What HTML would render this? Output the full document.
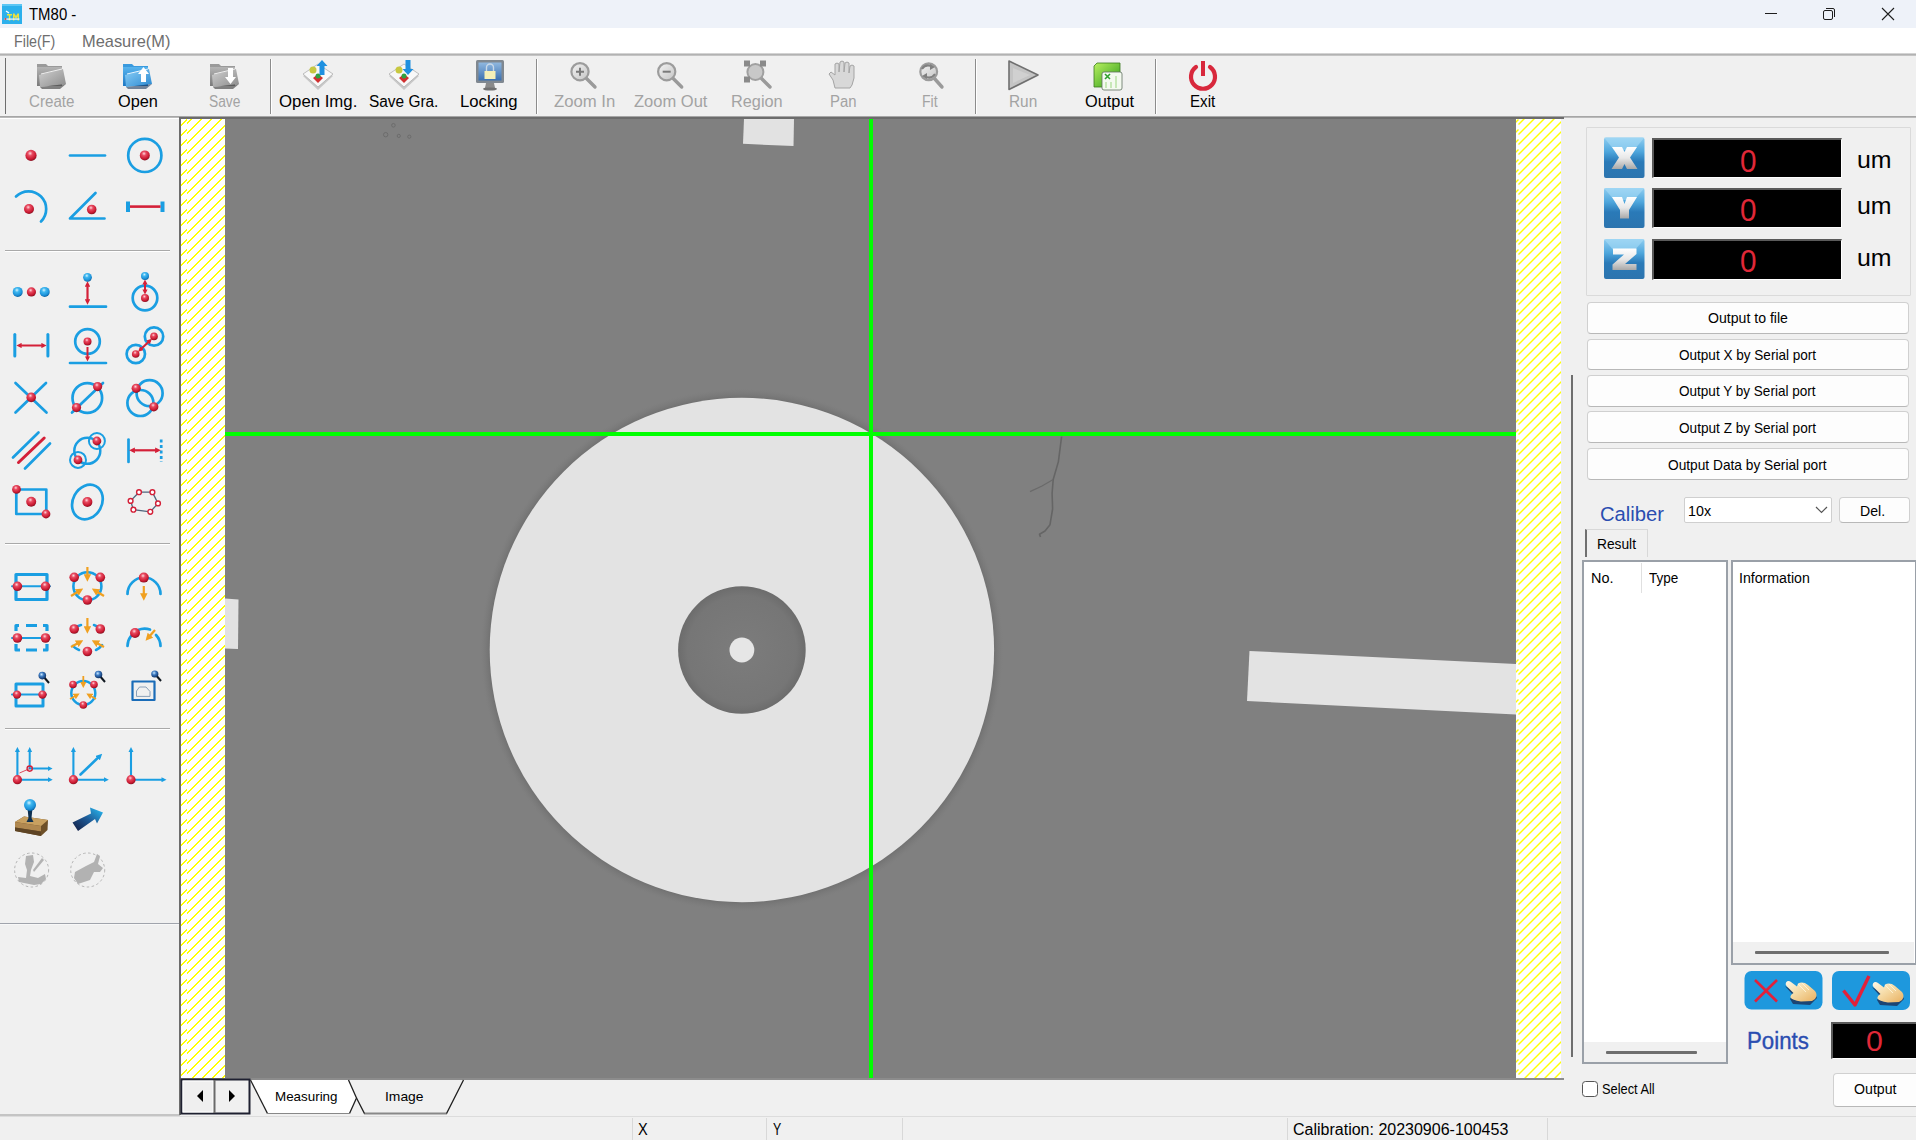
<!DOCTYPE html>
<html><head><meta charset="utf-8">
<style>
*{box-sizing:border-box;margin:0;padding:0}
html,body{width:1916px;height:1140px;overflow:hidden}
body{position:relative;background:#f0f0f0;font-family:"Liberation Sans",sans-serif;color:#000}
.a{position:absolute}
.tx{position:absolute;white-space:pre;line-height:normal;transform-origin:0 0}
svg.a{overflow:visible}
.hatch{background-color:#fff;background-image:repeating-linear-gradient(-45deg,#fff 0,#fff 5.6px,#ffff00 5.6px,#ffff00 7.07px)}
.btn{position:absolute;background:#fdfdfd;border:1px solid #d0d0d0;border-bottom-color:#b8b8b8;border-radius:4px}
.disp{position:absolute;background:#000;border-top:2px solid #5a5a5a;border-left:2px solid #5a5a5a;border-bottom:1px solid #fff;border-right:1px solid #fff}
.sep{position:absolute;width:2px;background:linear-gradient(90deg,#8c8c8c 50%,#fff 50%)}
</style></head><body>
<!-- title bar -->
<div class="a" style="left:0;top:0;width:1916px;height:28px;background:#eef2f9"></div>
<svg class="a" style="left:2px;top:4px" width="20" height="20">
<rect x="0" y="0" width="20" height="20" fill="#2cb0ec"/>
<rect x="0" y="0" width="20" height="2" fill="#5cc6f4"/>
<path d="M5 10 L10 10 L10 11.5 L8.3 11.5 L8.3 16.5 L6.8 16.5 L6.8 11.5 L5 11.5 Z" fill="#e6e840"/>
<path d="M11 16.5 L11 9.5 L12.5 9.5 L14 12 L15.5 9.5 L17 9.5 L17 16.5 L15.6 16.5 L15.6 12.5 L14 15 L12.4 12.5 L12.4 16.5 Z" fill="#e8e040"/>
<rect x="2.5" y="14.5" width="15" height="1.2" fill="#f4f8ff"/>
<circle cx="3.5" cy="15" r="1" fill="#e04040"/>
<path d="M4 7 L7 9" stroke="#fff" stroke-width="1.4"/>
</svg>

<div class="a" style="left:1765px;top:13px;width:12px;height:1px;background:#1e1e1e"></div>
<svg class="a" style="left:1821px;top:6px" width="16" height="16"><rect x="2.5" y="4.5" width="9" height="9" rx="1.5" fill="none" stroke="#1e1e1e" stroke-width="1"/><path d="M5 2.5H12a1.5 1.5 0 0 1 1.5 1.5V11" fill="none" stroke="#1e1e1e" stroke-width="1"/></svg>
<svg class="a" style="left:1881px;top:7px" width="14" height="14"><path d="M1 1L13 13M13 1L1 13" stroke="#1e1e1e" stroke-width="1.1"/></svg>
<!-- menu -->
<div class="a" style="left:0;top:28px;width:1916px;height:25px;background:#fff"></div>
<div class="a" style="left:0;top:53px;width:1916px;height:3px;background:linear-gradient(#e4e4e4,#a8a8a8 60%,#d8d8d8)"></div>
<!-- toolbar -->
<div class="a" style="left:5px;top:58px;width:1px;height:56px;background:#6e6e6e"></div>
<div class="sep" style="left:270px;top:59px;height:55px"></div>
<div class="sep" style="left:536px;top:59px;height:55px"></div>
<div class="sep" style="left:975px;top:59px;height:55px"></div>
<div class="sep" style="left:1155px;top:59px;height:55px"></div>
<div class="a" style="left:0;top:116px;width:1916px;height:2px;background:linear-gradient(#9c9c9c,#c4c4c4)"></div>
<svg class="a" style="left:0;top:0" width="1300" height="118" viewBox="0 0 1300 118">
<defs>
<linearGradient id="fgray" x1="0" y1="0" x2="0" y2="1"><stop offset="0" stop-color="#b4b4b4"/><stop offset="1" stop-color="#7a7a7a"/></linearGradient>
<linearGradient id="fgray2" x1="0" y1="0" x2="1" y2="1"><stop offset="0" stop-color="#d0d0d0"/><stop offset="1" stop-color="#8c8c8c"/></linearGradient>
<linearGradient id="fblue" x1="0" y1="0" x2="0" y2="1"><stop offset="0" stop-color="#58b4ee"/><stop offset="1" stop-color="#1e78c4"/></linearGradient>
<linearGradient id="fblue2" x1="0" y1="0" x2="1" y2="1"><stop offset="0" stop-color="#8cd0f8"/><stop offset="1" stop-color="#2a88d0"/></linearGradient>
<linearGradient id="lens" x1="0" y1="0" x2="1" y2="1"><stop offset="0" stop-color="#f4f4f4"/><stop offset="1" stop-color="#c4c4c4"/></linearGradient>
<linearGradient id="xlg" x1="0" y1="0" x2="1" y2="1"><stop offset="0" stop-color="#b8f060"/><stop offset="1" stop-color="#2c9a18"/></linearGradient>
<linearGradient id="scr" x1="0" y1="0" x2="0" y2="1"><stop offset="0" stop-color="#90b8e0"/><stop offset="1" stop-color="#3a70b0"/></linearGradient>
</defs>
<!-- Create (gray folder) -->
<path d="M37 64 L46 64 L48 66 L62 66 L62 70 L37 70 Z" fill="#9a9a9a"/>
<path d="M37 67 L62 67 L62 86 L37 86 Z" fill="url(#fgray)"/>
<path d="M39 75 L63 69 L66 84 L40 87 Z" fill="url(#fgray2)"/>
<path d="M41 74 L62 69" stroke="#eee" stroke-width="1"/>
<path d="M40 87 L66 84 L60 89 L42 89 Z" fill="#505050" opacity="0.7"/>
<!-- Open (blue folder, up arrow) -->
<path d="M123 64 L132 64 L134 66 L148 66 L148 70 L123 70 Z" fill="#3a9ade"/>
<path d="M123 67 L148 67 L148 86 L123 86 Z" fill="url(#fblue)"/>
<path d="M125 75 L149 69 L152 84 L126 87 Z" fill="url(#fblue2)"/>
<path d="M127 74 L148 69" stroke="#e8f6ff" stroke-width="1"/>
<path d="M126 87 L152 84 L146 89 L128 89 Z" fill="#1a3a60" opacity="0.6"/>
<path d="M143.5 67 L149 74 L146 74 L146 82 L141 82 L141 74 L138 74 Z" fill="#fff"/>
<!-- Save (gray folder, down arrow) -->
<path d="M210 64 L219 64 L221 66 L235 66 L235 70 L210 70 Z" fill="#9a9a9a"/>
<path d="M210 67 L235 67 L235 86 L210 86 Z" fill="url(#fgray)"/>
<path d="M212 75 L236 69 L239 84 L213 87 Z" fill="url(#fgray2)"/>
<path d="M214 74 L235 69" stroke="#eee" stroke-width="1"/>
<path d="M213 87 L239 84 L233 89 L215 89 Z" fill="#505050" opacity="0.7"/>
<path d="M228 68 L233 68 L233 77 L236 77 L230.5 84 L225 77 L228 77 Z" fill="#fff"/>
<!-- Open Img. -->
<g>
<path d="M303 76 L318 66 L333 76 L318 90 Z" fill="#c8c8c8"/>
<path d="M303 74 L318 64 L333 74 L318 87 Z" fill="#f8f8f8" stroke="#b0b0b0" stroke-width="0.8"/>
<circle cx="313" cy="70" r="3.5" fill="#c8c840"/>
<path d="M313 78 L318 74 L323 78 L318 83 Z" fill="#d03030"/>
<circle cx="318" cy="76" r="2.5" fill="#30a040"/>
<path d="M322 60 L327.5 66 L324.5 66 L324.5 75 L319.5 75 L319.5 66 L316.5 66 Z" fill="#1e90e0"/>
</g>
<g>
<path d="M389 76 L404 66 L419 76 L404 90 Z" fill="#c8c8c8"/>
<path d="M389 74 L404 64 L419 74 L404 87 Z" fill="#f8f8f8" stroke="#b0b0b0" stroke-width="0.8"/>
<circle cx="399" cy="70" r="3.5" fill="#c8c840"/>
<path d="M399 78 L404 74 L409 78 L404 83 Z" fill="#d03030"/>
<circle cx="404" cy="76" r="2.5" fill="#30a040"/>
<path d="M405.5 60 L410.5 60 L410.5 69 L413.5 69 L408 75 L402.5 69 L405.5 69 Z" fill="#1e90e0"/>
</g>
<!-- Locking (monitor) -->
<rect x="476" y="60" width="28" height="23" rx="1.5" fill="#808890"/>
<rect x="478.5" y="62.5" width="23" height="18" fill="url(#scr)"/>
<rect x="484.5" y="71" width="11" height="8" fill="#f4f0b8"/>
<path d="M486.5 71 L486.5 67.5 A3.5 3.5 0 0 1 493.5 67.5 L493.5 71" fill="none" stroke="#c8d8e8" stroke-width="1.4"/>
<path d="M486 83 L494 83 L495 88 L485 88 Z" fill="#8a8a8a"/>
<ellipse cx="490" cy="89" rx="7" ry="1.6" fill="#707070"/>
<!-- Zoom In -->
<g opacity="1">
<line x1="586" y1="78" x2="595" y2="87" stroke="#9a9a9a" stroke-width="3.4" stroke-linecap="round"/>
<circle cx="580" cy="71.7" r="8.6" fill="url(#lens)" stroke="#9c9c9c" stroke-width="2.2"/>
<path d="M576 71.7 L584 71.7 M580 67.7 L580 75.7" stroke="#7a7a7a" stroke-width="2"/>
<line x1="672.7" y1="78" x2="681.7" y2="87" stroke="#9a9a9a" stroke-width="3.4" stroke-linecap="round"/>
<circle cx="666.7" cy="71.7" r="8.6" fill="url(#lens)" stroke="#9c9c9c" stroke-width="2.2"/>
<path d="M662.7 71.7 L670.7 71.7" stroke="#7a7a7a" stroke-width="2"/>
<!-- Region -->
<line x1="761" y1="78" x2="770" y2="87" stroke="#9a9a9a" stroke-width="3.4" stroke-linecap="round"/>
<circle cx="755.4" cy="72" r="8" fill="#c8c8c8" stroke="#a0a0a0" stroke-width="2"/>
<rect x="744" y="60.5" width="6" height="6" fill="#8a8a8a"/><rect x="760" y="60.5" width="6" height="6" fill="#8a8a8a"/><rect x="744" y="76.5" width="6" height="6" fill="#8a8a8a"/>
<!-- Pan (hand) -->
<path d="M835 88 L833 80 L829 74 L831 72 L835 75 L835 64 Q837 62 839 64 L839 72 L840 62 Q842 60 844 62 L844 72 L845 63 Q847 61 849 63 L849 73 L850 66 Q852 64 854 66 L854 78 L852 85 L850 88 Z" fill="#d8d8d8" stroke="#a4a4a4" stroke-width="1"/>
<!-- Fit -->
<line x1="934" y1="78" x2="942" y2="87" stroke="#9a9a9a" stroke-width="3.4" stroke-linecap="round"/>
<circle cx="928.7" cy="71.7" r="8.4" fill="url(#lens)" stroke="#9c9c9c" stroke-width="2.2"/>
<path d="M922 69 Q926 63 933 67 M935 74 Q931 80 924 76" stroke="#808080" stroke-width="2" fill="none"/>
<path d="M930 64 L935 67 L930 70 Z M927 73 L922 76 L927 79 Z" fill="#808080"/>
</g>
<!-- Run -->
<path d="M1009 61 L1038 75 L1009 89.5 Z" fill="#c4c4c4" stroke="#707070" stroke-width="1.6" stroke-linejoin="round"/>
<path d="M1013 68 L1030 75 L1013 83 Z" fill="#d0d0d0"/>
<!-- Output (excel) -->
<path d="M1097 63 L1120 63 L1120 87 L1094 87 L1094 66 Z" fill="url(#xlg)" stroke="#3a7a20" stroke-width="0.8"/>
<rect x="1102" y="72" width="20" height="18" rx="2" fill="#f4faf0" stroke="#607060" stroke-width="0.8"/>
<path d="M1105 74 L1110 79 M1110 74 L1105 79" stroke="#30a030" stroke-width="1.6"/>
<path d="M1106 82 L1106 88 M1111 82 L1111 88 M1116 76 L1116 88" stroke="#c8e8b8" stroke-width="2"/>
<!-- Exit (power) -->
<path d="M1196 67 A12 12 0 1 0 1210 67" fill="none" stroke="#d8283c" stroke-width="4.2" stroke-linecap="round"/>
<line x1="1203" y1="61" x2="1203" y2="76" stroke="#d8283c" stroke-width="4"/>
</svg>


<!-- left panel -->
<div class="a" style="left:0;top:118px;width:179px;height:1px;background:#fff"></div>
<div class="a" style="left:5px;top:250px;width:165px;height:2px;background:linear-gradient(#a9a9a9 50%,#fff 50%)"></div>
<div class="a" style="left:5px;top:543px;width:165px;height:2px;background:linear-gradient(#a9a9a9 50%,#fff 50%)"></div>
<div class="a" style="left:5px;top:728px;width:165px;height:2px;background:linear-gradient(#a9a9a9 50%,#fff 50%)"></div>
<div class="a" style="left:0;top:923px;width:179px;height:2px;background:linear-gradient(#a0a4ac 50%,#f8f8f8 50%)"></div>
<div class="a" style="left:0;top:1114px;width:180px;height:2px;background:#c4c4c4"></div>
<svg class="a" style="left:0;top:0" width="180" height="1140" viewBox="0 0 180 1140">
<defs>
<radialGradient id="rb" cx="0.42" cy="0.32" r="0.7"><stop offset="0" stop-color="#ffd8de"/><stop offset="0.3" stop-color="#e84a60"/><stop offset="0.75" stop-color="#c81830"/><stop offset="1" stop-color="#801020"/></radialGradient>
<radialGradient id="bb" cx="0.42" cy="0.32" r="0.7"><stop offset="0" stop-color="#d8f4ff"/><stop offset="0.3" stop-color="#40b8f0"/><stop offset="0.75" stop-color="#1a90d8"/><stop offset="1" stop-color="#0a5c98"/></radialGradient>
<radialGradient id="mg" cx="0.4" cy="0.35" r="0.7"><stop offset="0" stop-color="#c8e8ff"/><stop offset="0.4" stop-color="#3a78c0"/><stop offset="1" stop-color="#0a2858"/></radialGradient>
<marker id="ar" viewBox="0 0 10 10" refX="5" refY="5" markerWidth="2.6" markerHeight="2.6" orient="auto-start-reverse"><path d="M0 0L10 5L0 10Z" fill="#d42038"/></marker>
<marker id="ab" viewBox="0 0 10 10" refX="4" refY="5" markerWidth="2.4" markerHeight="2.4" orient="auto-start-reverse"><path d="M0 0L10 5L0 10Z" fill="#1a9ee2"/></marker>
<marker id="ao" viewBox="0 0 10 10" refX="5" refY="5" markerWidth="3.4" markerHeight="3.4" orient="auto"><path d="M0 0L10 5L0 10Z" fill="#f0a020"/></marker>
</defs>
<g fill="none" stroke="#1a9ee2" stroke-width="2.7" stroke-linecap="round" stroke-linejoin="round">
<!-- row1 -->
<line x1="70" y1="155.5" x2="105" y2="155.5"/>
<circle cx="144.8" cy="155.4" r="16.6"/>
<!-- row2 -->
<path d="M16 196.5 A17 17 0 1 1 41 221.5"/>
<path d="M104.5 218.5 L70 218.5 L95.5 193"/>
<line x1="128" y1="201.5" x2="128" y2="212" stroke-width="4" stroke-linecap="butt"/>
<line x1="162.5" y1="201.5" x2="162.5" y2="212" stroke-width="4" stroke-linecap="butt"/>
<!-- row3 -->
<line x1="70" y1="306.7" x2="106" y2="306.7"/>
<circle cx="145" cy="298" r="12.3"/>
<!-- row4 -->
<line x1="14.8" y1="334.5" x2="14.8" y2="356" stroke-width="3"/>
<line x1="47.9" y1="334.5" x2="47.9" y2="356" stroke-width="3"/>
<circle cx="87.5" cy="341.5" r="12.3"/>
<line x1="70" y1="363" x2="106" y2="363"/>
<circle cx="135.8" cy="354" r="9.2"/>
<circle cx="154" cy="336.5" r="9.2"/>
<!-- row5 -->
<line x1="15.5" y1="383" x2="46.5" y2="412.5"/>
<line x1="46" y1="383" x2="15.5" y2="412.5"/>
<circle cx="87.3" cy="398" r="14.8"/>
<line x1="72" y1="412.5" x2="103" y2="383"/>
<circle cx="140.4" cy="403" r="13"/>
<circle cx="149.6" cy="393.2" r="13"/>
<!-- row6 -->
<line x1="13" y1="457.5" x2="38.5" y2="432.5"/>
<line x1="25" y1="468.5" x2="50" y2="443.5"/>
<circle cx="87.3" cy="450.8" r="13" stroke-width="2.5"/>
<circle cx="96.9" cy="441" r="8" stroke-width="2"/>
<circle cx="78" cy="459.9" r="8" stroke-width="2"/>
<line x1="128.5" y1="439.5" x2="128.5" y2="462"/>
<line x1="161.2" y1="439.5" x2="161.2" y2="462" stroke-dasharray="3 2.5" stroke-linecap="butt"/>
<!-- row7 -->
<rect x="16.3" y="489.5" width="30" height="24.5" stroke-linecap="butt"/>
<ellipse cx="87.4" cy="502" rx="18" ry="14.5" transform="rotate(-62 87.4 502)"/>
<!-- row8 -->
<rect x="16" y="574.5" width="31" height="25" stroke-width="3.2" stroke-linecap="butt"/>
<line x1="12" y1="586.3" x2="50" y2="586.3" stroke-width="2"/>
<circle cx="87.4" cy="586.3" r="14" stroke-width="2.6"/>
<path d="M127.5 594 A16.5 16.5 0 0 1 160.5 594"/>
<!-- row9 -->
<path d="M16 574.5 M19 625.5 L16 625.5 L16 631 M16 644 L16 650 L20 650 M26 650 L37 650 M43 650 L47 650 L47 644 M47 631 L47 625.5 L43 625.5 M37 625.5 L26 625.5" stroke-width="3.2" stroke-linecap="butt"/>
<line x1="12" y1="638" x2="50" y2="638" stroke-width="2"/>
<path d="M81 625 A14 14 0 0 0 74 629 M100.5 629 A14 14 0 0 0 94 625 M73 646 A14 14 0 0 0 79 650 M96 650 A14 14 0 0 0 102 645" stroke-width="2.6"/>
<path d="M127.5 646 A16.5 16.5 0 0 1 131 636 M138 630 A16.5 16.5 0 0 1 150 629.5 M156 635 A16.5 16.5 0 0 1 160.5 646"/>
<!-- row10 -->
<rect x="16" y="684" width="27" height="22" stroke-width="3" stroke-linecap="butt"/>
<line x1="12" y1="694.6" x2="46" y2="694.6" stroke-width="2"/>
<circle cx="83.3" cy="693" r="12" stroke-width="2.5"/>
<rect x="132.5" y="681.5" width="22" height="18.5" stroke="#1a6cb8" stroke-width="2.2" stroke-linecap="butt"/>
<path d="M136.5 696 L136.5 691 L139.5 687 L146 687 L150 691.5 L150 696 Z" stroke="#8aa0b8" stroke-width="1"/>
<!-- row11 -->
<path d="M17.4 750 L17.4 779.7 L49.7 779.7" stroke-width="2.1" stroke-linecap="butt" marker-start="url(#ab)" marker-end="url(#ab)"/>
<path d="M29.7 750 L29.7 768.6 L49.7 768.6" stroke-width="2" stroke-linecap="butt" marker-start="url(#ab)" marker-end="url(#ab)"/>
<path d="M73.4 750 L73.4 779.7 L105.8 779.7" stroke-width="2.1" stroke-linecap="butt" marker-start="url(#ab)" marker-end="url(#ab)"/>
<path d="M80.5 774.5 L99.5 756.3" stroke-width="2.6" marker-end="url(#ab)"/>
<path d="M131 750 L131 779.7 L163.5 779.7" stroke-width="2.1" stroke-linecap="butt" marker-start="url(#ab)" marker-end="url(#ab)"/>
</g>
<!-- red elements -->
<g stroke="#d42038" fill="none" stroke-linecap="butt">
<line x1="130" y1="206.6" x2="160.5" y2="206.6" stroke-width="2.6"/>
<line x1="87.5" y1="284" x2="87.5" y2="302" stroke-width="2.2" marker-start="url(#ar)" marker-end="url(#ar)"/>
<line x1="145" y1="282" x2="145" y2="292" stroke-width="2" marker-start="url(#ar)" marker-end="url(#ar)"/>
<line x1="19" y1="345.5" x2="44" y2="345.5" stroke-width="2" marker-start="url(#ar)" marker-end="url(#ar)"/>
<line x1="87.5" y1="347" x2="87.5" y2="359" stroke-width="2" marker-end="url(#ar)"/>
<line x1="140" y1="350" x2="150" y2="340.5" stroke-width="2" marker-start="url(#ar)" marker-end="url(#ar)"/>
<line x1="18.5" y1="462.5" x2="44.2" y2="438" stroke-width="3" stroke-linecap="round"/>
<line x1="132" y1="450.3" x2="158" y2="450.3" stroke-width="2.2" marker-start="url(#ar)" marker-end="url(#ar)"/>
<line x1="19.5" y1="773" x2="29.7" y2="768.6" stroke-width="0.8"/>
<circle cx="29.7" cy="768.6" r="2.6" stroke-width="1.4"/>
</g>
<!-- polygon -->
<path d="M139 492.2 L152.4 492.2 L158 503.4 L150.3 511.8 L133.4 509.7 L130.6 500.9 Z" fill="none" stroke="#50647c" stroke-width="1.3"/>
<g fill="#fff" stroke="#d42038" stroke-width="1.4">
<circle cx="139" cy="492.2" r="2.4"/><circle cx="152.4" cy="492.2" r="2.4"/><circle cx="158" cy="503.4" r="2.4"/><circle cx="150.3" cy="511.8" r="2.4"/><circle cx="133.4" cy="509.7" r="2.4"/><circle cx="130.6" cy="500.9" r="2.4"/>
</g>
<!-- orange arrows -->
<g stroke="#f0a020" stroke-width="2.2" fill="none">
<line x1="87.4" y1="567" x2="87.4" y2="578" marker-end="url(#ao)"/>
<line x1="71" y1="596" x2="80" y2="590.5" marker-end="url(#ao)"/>
<line x1="104" y1="596" x2="95" y2="590.5" marker-end="url(#ao)"/>
<line x1="143.8" y1="586" x2="143.8" y2="597" marker-end="url(#ao)"/>
<line x1="87.4" y1="618" x2="87.4" y2="630" marker-end="url(#ao)"/>
<line x1="71" y1="647" x2="80" y2="642" marker-end="url(#ao)"/>
<line x1="104" y1="647" x2="95" y2="642" marker-end="url(#ao)"/>
<line x1="155" y1="630" x2="148" y2="638" marker-end="url(#ao)"/>
<line x1="83.3" y1="676" x2="83.3" y2="685" marker-end="url(#ao)" stroke-width="1.8"/>
<line x1="70" y1="699" x2="77" y2="695" marker-end="url(#ao)" stroke-width="1.8"/>
<line x1="96" y1="699" x2="89" y2="695" marker-end="url(#ao)" stroke-width="1.8"/>
</g>
<!-- magnifiers -->
<g>
<line x1="43" y1="676" x2="49" y2="683" stroke="#101820" stroke-width="2"/><circle cx="42.3" cy="675.6" r="3.8" fill="url(#mg)"/>
<line x1="99" y1="675" x2="105" y2="682" stroke="#101820" stroke-width="2"/><circle cx="98.5" cy="674.5" r="3.8" fill="url(#mg)"/>
<line x1="155" y1="674" x2="161" y2="681" stroke="#101820" stroke-width="2"/><circle cx="154.8" cy="674" r="3.6" fill="url(#mg)"/>
</g>
<!-- red balls -->
<g fill="url(#rb)">
<circle cx="31" cy="155.4" r="5.6"/>
<circle cx="144.8" cy="155.4" r="5"/>
<circle cx="29" cy="209" r="5"/>
<circle cx="91.7" cy="209.5" r="4.8"/>
<circle cx="31.4" cy="291.9" r="4.6"/>
<circle cx="145" cy="298" r="4"/>
<circle cx="87.5" cy="341.5" r="4"/>
<circle cx="135.7" cy="354" r="3.8"/>
<circle cx="154" cy="336.4" r="3.8"/>
<circle cx="31.2" cy="397.4" r="4.8"/>
<circle cx="76.5" cy="407.6" r="4.6"/>
<circle cx="97.6" cy="386.6" r="4.6"/>
<circle cx="136.2" cy="388.3" r="4.6"/>
<circle cx="153.8" cy="406.8" r="4.6"/>
<circle cx="96.9" cy="441" r="4.4"/>
<circle cx="78" cy="459.9" r="4.4"/>
<circle cx="16.5" cy="489.4" r="4.4"/>
<circle cx="46" cy="514" r="4.4"/>
<circle cx="31.2" cy="501.7" r="5"/>
<circle cx="87.4" cy="502" r="5"/>
<circle cx="17.4" cy="586.3" r="4.8"/><circle cx="45.5" cy="586.3" r="4.8"/>
<circle cx="74.2" cy="577.3" r="4.8"/><circle cx="100.3" cy="577.3" r="4.8"/><circle cx="87.4" cy="600" r="4.8"/>
<circle cx="143.8" cy="577.6" r="5"/>
<circle cx="17.4" cy="638" r="4.8"/><circle cx="45.5" cy="638" r="4.8"/>
<circle cx="74.2" cy="629" r="4.8"/><circle cx="100.3" cy="629" r="4.8"/><circle cx="87.4" cy="651.5" r="4.8"/>
<circle cx="135" cy="633" r="5"/>
<circle cx="17" cy="694.6" r="4.2"/><circle cx="42.5" cy="694.6" r="4.2"/>
<circle cx="73" cy="684.5" r="3.8"/><circle cx="94" cy="684.5" r="3.8"/><circle cx="83.3" cy="705" r="3.8"/>
<circle cx="17.4" cy="779.7" r="4.6"/>
<circle cx="73.4" cy="779.7" r="4.6"/>
<circle cx="131" cy="779.7" r="4.6"/>
</g>
<!-- blue balls -->
<g fill="url(#bb)">
<circle cx="17.7" cy="291.9" r="5"/>
<circle cx="44.7" cy="291.9" r="5"/>
<circle cx="87.5" cy="277.3" r="4.4"/>
<circle cx="145" cy="276" r="4"/>
</g>
<!-- stamp -->
<path d="M15 822 L24 816.5 L48 820 L47.5 830 L41 836 L15 831 Z" fill="#6e5028"/>
<path d="M15 822 L24 816.5 L48 820 L41 826 Z" fill="#c8a060"/>
<path d="M15 822 L41 826 L41 831.5 L15 827.5 Z" fill="#b08850"/>
<path d="M15 827.5 L41 831.5 L41 836 L15 831 Z" fill="#5e4424"/>
<path d="M27.5 808 L32.5 808 L31.5 818 L33.5 822 L26.5 822 L28.5 818 Z" fill="#0e3050"/>
<circle cx="30" cy="805" r="6" fill="url(#bb)"/>
<!-- arrow -->
<defs><linearGradient id="arg" x1="0" y1="1" x2="1" y2="0"><stop offset="0" stop-color="#141c40"/><stop offset="0.5" stop-color="#1e5a96"/><stop offset="1" stop-color="#28c0f8"/></linearGradient></defs>
<path d="M72.5 822.5 L91 813.5 L90 807.5 L103 812.5 L97 823.5 L95 819 L78 831 Z" fill="url(#arg)"/>
<!-- disabled icons -->
<g stroke="#b4b4b4" fill="none" stroke-width="1" stroke-dasharray="2.5 2.5">
<circle cx="31.6" cy="870" r="17"/>
<circle cx="87.7" cy="870" r="17"/>
</g>
<g fill="#b2b2b2">
<path d="M26 856 L33 855 L34 862 L31 870 L30 876 L38 878 L45 874 L46 879 L41 884 L34 885 L19 882 L18 877 L26 878 L27 870 L25 864 Z"/>
<path d="M42 858 L44 860 L34 872 L33 870 Z"/>
<path d="M75 872 L86 866 L94 862 L97 854 L100 856 L98 864 L103 868 L100 872 L94 872 L90 880 L78 884 L74 878 Z"/>
</g>
</svg>


<!-- canvas -->
<div class="a" style="left:179px;top:117px;width:1385px;height:2px;background:#6c6c6c"></div>
<div class="a" style="left:179px;top:117px;width:2px;height:998px;background:#6c6c6c"></div>
<div class="a hatch" style="left:181px;top:119px;width:44px;height:959px;background-position:6px 0"></div>
<div class="a hatch" style="left:1516px;top:119px;width:45px;height:959px;background-position:2.5px 0"></div>
<div class="a" style="left:225px;top:119px;width:1291px;height:959px;background:#808080;overflow:hidden">
<svg class="a" style="left:0;top:0" width="1291" height="959" viewBox="225 119 1291 959">
<defs>
<radialGradient id="halo" cx="741.9" cy="650" r="262" gradientUnits="userSpaceOnUse">
<stop offset="0.955" stop-color="#646464" stop-opacity="0.9"/><stop offset="0.966" stop-color="#707070" stop-opacity="0.75"/><stop offset="0.985" stop-color="#787878" stop-opacity="0.4"/><stop offset="1" stop-color="#808080" stop-opacity="0"/></radialGradient>
<radialGradient id="inner" cx="741.9" cy="650" r="64" gradientUnits="userSpaceOnUse">
<stop offset="0" stop-color="#7c7c7c"/><stop offset="0.85" stop-color="#767676"/><stop offset="1" stop-color="#6c6c6c"/></radialGradient>
</defs>
<circle cx="741.9" cy="650" r="262" fill="url(#halo)"/>
<circle cx="741.9" cy="650" r="252.2" fill="#e3e3e3"/>
<circle cx="741.9" cy="650" r="63.8" fill="url(#inner)"/>
<circle cx="741.9" cy="650" r="12.4" fill="#e6e6e6"/>
<!-- top tab -->
<path d="M744 119 L794 119 L793.5 146 L743 143.8 Z" fill="#e2e2e2"/>
<!-- left tab -->
<path d="M225 598.5 L238.5 599.5 L238 649 L225 648.5 Z" fill="#e2e2e2"/>
<!-- right bar -->
<path d="M1249.5 651 L1516 664 L1516 714.5 L1247 701 Z" fill="#e3e3e3"/>
<!-- crack -->
<path d="M1061.6 436.5 L1058.4 461.6 L1053.2 479.5 L1052.1 493.2 L1052.6 509 L1050 524.7 L1045 531 L1039.5 534.2 L1040.5 537" fill="none" stroke="#656565" stroke-width="1.6" stroke-linejoin="round"/>
<path d="M1053.2 479.5 L1042 486 L1030 491.6" fill="none" stroke="#6a6a6a" stroke-width="1.3"/>
<!-- dust -->
<g fill="none" stroke="#6c6c6c" stroke-width="1"><circle cx="393.4" cy="125.3" r="1.8"/><circle cx="385.7" cy="134.7" r="2.2"/><circle cx="398.8" cy="135.9" r="1.6"/><circle cx="409.3" cy="136.7" r="1.6"/></g>
<!-- crosshair -->
<rect x="225" y="432" width="1291" height="4" fill="#00ff00"/>
<rect x="869" y="119" width="4" height="959" fill="#00ff00"/>
</svg>

</div>
<div class="a" style="left:181px;top:1078px;width:1383px;height:2px;background:#8c8c8c"></div>
<svg class="a" style="left:0;top:0" width="1916" height="1140">
<rect x="181.5" y="1079.5" width="68" height="34" fill="#f0f0f0" stroke="#1e2030" stroke-width="2"/>
<rect x="183" y="1081" width="30" height="31" fill="#efefef" stroke="#fff" stroke-width="1"/>
<line x1="214.5" y1="1080" x2="214.5" y2="1113" stroke="#6a6a6a" stroke-width="2"/>
<path d="M203 1090 L197 1096 L203 1102 Z" fill="#000"/>
<path d="M229 1090 L235 1096 L229 1102 Z" fill="#000"/>
<path d="M250.5 1080 L348.5 1080 L356.5 1098 L349.5 1113.5 L267.5 1113.5 Z" fill="#fff"/>
<path d="M250.5 1080 L267.5 1113.5" stroke="#202020" stroke-width="1.3" fill="none"/>
<path d="M348.5 1080 L356.5 1098 L349.5 1113.5" stroke="#202020" stroke-width="1.3" fill="none"/>
<path d="M267 1113.5 L349 1113.5" stroke="#888" stroke-width="1"/>
<path d="M356.5 1098 L364.5 1113.5 L446.5 1113.5 L463.5 1080" stroke="#202020" stroke-width="1.3" fill="none"/>
<path d="M364.5 1113.5 L446.5 1113.5" stroke="#888" stroke-width="1"/>
</svg>


<!-- status bar -->
<div class="a" style="left:0;top:1116px;width:1916px;height:1px;background:#dcdcdc"></div>
<div class="a" style="left:632px;top:1118px;width:1px;height:22px;background:#d8d8d8"></div>
<div class="a" style="left:766px;top:1118px;width:1px;height:22px;background:#d8d8d8"></div>
<div class="a" style="left:902px;top:1118px;width:1px;height:22px;background:#d8d8d8"></div>
<div class="a" style="left:1287px;top:1118px;width:1px;height:22px;background:#d8d8d8"></div>
<div class="a" style="left:1547px;top:1118px;width:1px;height:22px;background:#d8d8d8"></div>

<!-- right panel -->
<!-- group box -->
<div class="a" style="left:1586px;top:127px;width:325px;height:169px;border:1px solid #dadada;border-radius:1px"></div>
<svg class="a" style="left:0;top:0" width="1916" height="1140">
<defs>
<linearGradient id="axbg" x1="0" y1="0" x2="0" y2="1"><stop offset="0" stop-color="#8fcdf0"/><stop offset="0.35" stop-color="#4ea6dc"/><stop offset="0.6" stop-color="#2a7ab8"/><stop offset="1" stop-color="#2c74ae"/></linearGradient>
<linearGradient id="axlet" x1="0" y1="0" x2="0" y2="1"><stop offset="0" stop-color="#ffffff"/><stop offset="0.5" stop-color="#e8e8e8"/><stop offset="1" stop-color="#a8a8a8"/></linearGradient>
<linearGradient id="hand" x1="0" y1="0" x2="1" y2="1"><stop offset="0" stop-color="#fff8e8"/><stop offset="0.45" stop-color="#f6dca8"/><stop offset="1" stop-color="#e8b060"/></linearGradient>
</defs>
<g>
<rect x="1604" y="137.5" width="40.5" height="40.5" rx="2" fill="url(#axbg)"/>
<path d="M1604 137.5 L1644.5 137.5 L1634 150 L1614 150 Z" fill="#a8dcf6" opacity="0.6"/>
<path d="M1612 147 L1622 147 L1624.5 152 L1627 147 L1637 147 L1630 157.5 L1637.5 169 L1627 169 L1624.5 164 L1622 169 L1611.5 169 L1619 157.5 Z" fill="url(#axlet)"/>
<rect x="1604" y="188" width="40.5" height="40" rx="2" fill="url(#axbg)"/>
<path d="M1604 188 L1644.5 188 L1634 200 L1614 200 Z" fill="#a8dcf6" opacity="0.6"/>
<path d="M1612 197 L1622 197 L1624.5 204 L1627 197 L1637 197 L1629 210 L1629 218.5 L1620 218.5 L1620 210 Z" fill="url(#axlet)"/>
<rect x="1604" y="239" width="40.5" height="40" rx="2" fill="url(#axbg)"/>
<path d="M1604 239 L1644.5 239 L1634 251 L1614 251 Z" fill="#a8dcf6" opacity="0.6"/>
<path d="M1613 248.5 L1636.5 248.5 L1636.5 254 L1625 264 L1636.5 264 L1636.5 270 L1612.5 270 L1612.5 264.5 L1624 254.5 L1613 254.5 Z" fill="url(#axlet)"/>
</g>
<!-- ok/cancel buttons -->
<rect x="1744.5" y="971" width="78" height="38.5" rx="7" fill="#1e98dd"/>
<path d="M1755 980 L1777 1001.5 M1777 980 L1755 1001.5" stroke="#e3203a" stroke-width="2.6"/>
<g>
<path d="M1785 986 L1793 995 L1790 999 L1793 1004 L1810 1005 L1817 998 L1815 994 L1803 996 Z" fill="#1c2a50" opacity="0.75"/>
<path d="M1786 982.5 Q1788 980 1791 982 L1797 986.5 L1798 983.5 Q1803 981 1808 985 L1815 991 Q1818 995 1815 999 L1812 1001 L1801 1001.5 Q1792 1000 1790.5 997.5 Q1790 995 1793.5 993 L1786.5 986 Q1785 984 1786 982.5 Z" fill="url(#hand)"/>
<path d="M1798 984 L1806 992 M1802 983 L1809 990" stroke="#fff8e0" stroke-width="1" opacity="0.8"/>
</g>
<rect x="1832" y="971" width="78" height="39" rx="7" fill="#1e98dd"/>
<path d="M1843.5 990.5 L1855 1005 L1869 976" stroke="#e3203a" stroke-width="3.4" fill="none" stroke-linejoin="round"/>
<g transform="translate(87 1)">
<path d="M1785 986 L1793 995 L1790 999 L1793 1004 L1810 1005 L1817 998 L1815 994 L1803 996 Z" fill="#1c2a50" opacity="0.75"/>
<path d="M1786 982.5 Q1788 980 1791 982 L1797 986.5 L1798 983.5 Q1803 981 1808 985 L1815 991 Q1818 995 1815 999 L1812 1001 L1801 1001.5 Q1792 1000 1790.5 997.5 Q1790 995 1793.5 993 L1786.5 986 Q1785 984 1786 982.5 Z" fill="url(#hand)"/>
<path d="M1798 984 L1806 992 M1802 983 L1809 990" stroke="#fff8e0" stroke-width="1" opacity="0.8"/>
</g>
<!-- checkbox -->
<rect x="1582.5" y="1081.5" width="15" height="15" rx="3" fill="#fff" stroke="#555" stroke-width="1"/>
</svg>
<!-- displays -->
<div class="disp" style="left:1652px;top:138px;width:189.5px;height:40px"></div>
<div class="disp" style="left:1652px;top:188px;width:189.5px;height:40px"></div>
<div class="disp" style="left:1652px;top:239px;width:189.5px;height:40.5px"></div>
<div class="disp" style="left:1831px;top:1021.5px;width:90px;height:37px"></div>
<!-- buttons -->
<div class="btn" style="left:1587px;top:302px;width:322px;height:31.5px"></div>
<div class="btn" style="left:1587px;top:338.5px;width:322px;height:31.5px"></div>
<div class="btn" style="left:1587px;top:375px;width:322px;height:31.5px"></div>
<div class="btn" style="left:1587px;top:411px;width:322px;height:31.5px"></div>
<div class="btn" style="left:1587px;top:448px;width:322px;height:31.5px"></div>
<div class="a" style="left:1683.5px;top:497px;width:148px;height:26px;background:#fff;border:1px solid #cfcfcf;border-radius:2px"></div>
<div class="btn" style="left:1838.5px;top:497px;width:71px;height:26px"></div>
<div class="btn" style="left:1833px;top:1072.5px;width:90px;height:34.5px"></div>
<!-- result tab -->
<div class="a" style="left:1584.5px;top:528.5px;width:63px;height:28px;background:#f0f0f0;border:1px solid #d8d8d8;border-left:2px solid #707070;border-bottom:none"></div>
<!-- vertical divider -->
<div class="a" style="left:1571px;top:375px;width:2px;height:682px;background:#6e6e6e"></div>
<!-- list 1 -->
<div class="a" style="left:1582px;top:560px;width:146px;height:504px;background:#fff;border:2px solid #9aa0a8;border-right-width:2px"></div>
<div class="a" style="left:1584px;top:1042px;width:142px;height:20px;background:#f0f0f0"></div>
<div class="a" style="left:1606px;top:1050.5px;width:91px;height:3px;background:#6e6e6e;border-radius:1px"></div>
<div class="a" style="left:1641px;top:563px;width:1px;height:30px;background:#e0e0e0"></div>
<!-- list 2 -->
<div class="a" style="left:1730.5px;top:560px;width:186px;height:404.5px;background:#fff;border:2px solid #9aa0a8"></div>
<div class="a" style="left:1732.5px;top:942px;width:181px;height:20.5px;background:#f0f0f0"></div>
<div class="a" style="left:1755px;top:950.5px;width:134px;height:3px;background:#6e6e6e;border-radius:1px"></div>
<svg class="a" style="left:0;top:0" width="1916" height="1140"><path d="M1816 507 L1821.5 512.5 L1827 507" stroke="#555" stroke-width="1.2" fill="none"/></svg>


<div class="tx" style="left:29.00px;top:5.82px;font-size:16px;color:#000;transform:scaleX(0.9336);">TM80 -</div>
<div class="tx" style="left:13.52px;top:31.94px;font-size:16.2px;color:#6e6e6e;transform:scaleX(0.8818);">File(F)</div>
<div class="tx" style="left:81.99px;top:31.94px;font-size:16.2px;color:#6e6e6e;transform:scaleX(1.0133);">Measure(M)</div>
<div class="tx" style="left:28.50px;top:93.12px;font-size:16px;color:#a3a3a3;transform:scaleX(0.9455);">Create</div>
<div class="tx" style="left:118.00px;top:93.12px;font-size:16px;color:#000;transform:scaleX(1.0198);">Open</div>
<div class="tx" style="left:208.50px;top:93.12px;font-size:16px;color:#a3a3a3;transform:scaleX(0.8614);">Save</div>
<div class="tx" style="left:279.20px;top:93.12px;font-size:16px;color:#000;transform:scaleX(1.0484);">Open Img.</div>
<div class="tx" style="left:369.00px;top:93.12px;font-size:16px;color:#000;transform:scaleX(0.9634);">Save Gra.</div>
<div class="tx" style="left:460.46px;top:93.12px;font-size:16px;color:#000;transform:scaleX(1.0423);">Locking</div>
<div class="tx" style="left:554.00px;top:93.12px;font-size:16px;color:#a3a3a3;transform:scaleX(1.0435);">Zoom In</div>
<div class="tx" style="left:634.00px;top:93.12px;font-size:16px;color:#a3a3a3;transform:scaleX(1.0323);">Zoom Out</div>
<div class="tx" style="left:731.28px;top:93.12px;font-size:16px;color:#a3a3a3;transform:scaleX(1.0183);">Region</div>
<div class="tx" style="left:830.37px;top:93.12px;font-size:16px;color:#a3a3a3;transform:scaleX(0.9296);">Pan</div>
<div class="tx" style="left:921.92px;top:93.12px;font-size:16px;color:#a3a3a3;transform:scaleX(0.8772);">Fit</div>
<div class="tx" style="left:1008.64px;top:93.12px;font-size:16px;color:#a3a3a3;transform:scaleX(0.9616);">Run</div>
<div class="tx" style="left:1084.60px;top:93.12px;font-size:16px;color:#000;transform:scaleX(1.0209);">Output</div>
<div class="tx" style="left:1190.05px;top:93.12px;font-size:16px;color:#000;transform:scaleX(0.9456);">Exit</div>
<div class="tx" style="left:638.00px;top:1121.02px;font-size:16px;color:#000;transform:scaleX(0.9091);">X</div>
<div class="tx" style="left:773.30px;top:1121.02px;font-size:16px;color:#000;transform:scaleX(0.7727);">Y</div>
<div class="tx" style="left:1293.00px;top:1121.02px;font-size:16px;color:#000;">Calibration: 20230906-100453</div>
<div class="tx" style="left:1856.96px;top:145.98px;font-size:24px;color:#000;transform:scaleX(1.0368);">um</div>
<div class="tx" style="left:1856.96px;top:192.18px;font-size:24px;color:#000;transform:scaleX(1.0368);">um</div>
<div class="tx" style="left:1856.96px;top:243.88px;font-size:24px;color:#000;transform:scaleX(1.0368);">um</div>
<div class="tx" style="left:1707.70px;top:309.43px;font-size:15px;color:#000;transform:scaleX(0.9397);">Output to file</div>
<div class="tx" style="left:1679.00px;top:345.93px;font-size:15px;color:#000;transform:scaleX(0.9032);">Output X by Serial port</div>
<div class="tx" style="left:1679.00px;top:382.23px;font-size:15px;color:#000;transform:scaleX(0.9032);">Output Y by Serial port</div>
<div class="tx" style="left:1679.00px;top:418.62px;font-size:15px;color:#000;transform:scaleX(0.9082);">Output Z by Serial port</div>
<div class="tx" style="left:1667.70px;top:455.93px;font-size:15px;color:#000;transform:scaleX(0.9142);">Output Data by Serial port</div>
<div class="tx" style="left:1599.71px;top:501.65px;font-size:20.5px;color:#2a4db0;transform:scaleX(0.9857);">Caliber</div>
<div class="tx" style="left:1688.48px;top:502.63px;font-size:14px;color:#000;transform:scaleX(1.0198);">10x</div>
<div class="tx" style="left:1859.79px;top:502.63px;font-size:14px;color:#000;transform:scaleX(1.0084);">Del.</div>
<div class="tx" style="left:1597.32px;top:536.33px;font-size:14px;color:#000;transform:scaleX(0.9821);">Result</div>
<div class="tx" style="left:1590.57px;top:569.83px;font-size:14px;color:#000;transform:scaleX(1.0303);">No.</div>
<div class="tx" style="left:1649.20px;top:569.83px;font-size:14px;color:#000;transform:scaleX(0.9651);">Type</div>
<div class="tx" style="left:1739.49px;top:569.83px;font-size:14px;color:#000;transform:scaleX(1.0110);">Information</div>
<div class="tx" style="left:1747.23px;top:1028.28px;font-size:23px;color:#2a4db0;transform:scaleX(0.9676);-webkit-text-stroke:0.35px #2a4db0;">Points</div>
<div class="tx" style="left:1601.60px;top:1081.28px;font-size:14.5px;color:#000;transform:scaleX(0.8834);">Select All</div>
<div class="tx" style="left:1854.00px;top:1081.28px;font-size:14.5px;color:#000;transform:scaleX(0.9770);">Output</div>
<div class="tx" style="left:274.71px;top:1089.08px;font-size:13.5px;color:#000;transform:scaleX(0.9915);">Measuring</div>
<div class="tx" style="left:384.97px;top:1089.08px;font-size:13.5px;color:#000;transform:scaleX(1.0274);">Image</div>
<div class="tx" style="left:1739.83px;top:143.60px;font-size:30.5px;color:#e02838;transform:scaleX(0.9733);">0</div>
<div class="tx" style="left:1739.83px;top:193.20px;font-size:30.5px;color:#e02838;transform:scaleX(0.9733);">0</div>
<div class="tx" style="left:1739.83px;top:243.90px;font-size:30.5px;color:#e02838;transform:scaleX(0.9733);">0</div>
<div class="tx" style="left:1866.16px;top:1025.26px;font-size:29px;color:#e02838;transform:scaleX(1.0429);">0</div>
</body></html>
